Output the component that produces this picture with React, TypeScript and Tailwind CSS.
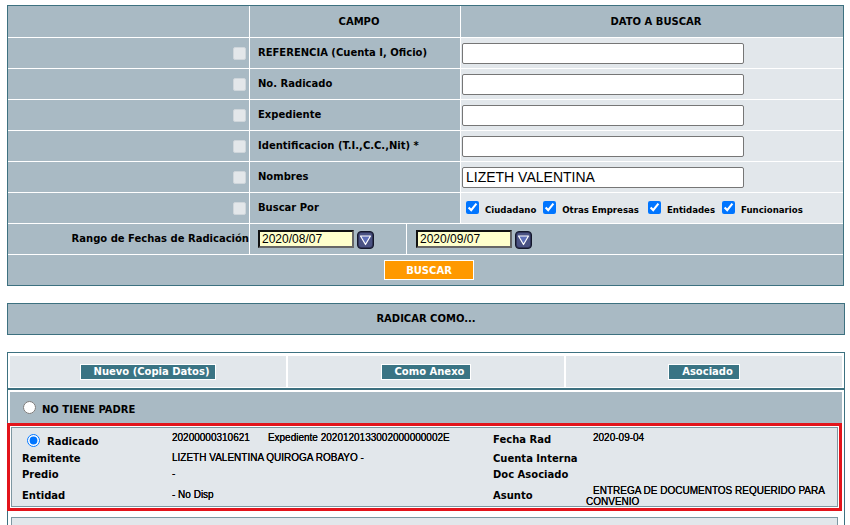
import React from "react";

const V = "font-['DejaVu_Sans',Verdana,sans-serif] font-bold text-[10px] leading-[12px] text-black";
const A = "font-['Liberation_Sans',Arial,sans-serif] text-[10px] leading-[12px] text-black [text-shadow:0_0_0.3px_#000]";

function DisabledBox() {
  return <span className="inline-block w-[13px] h-[13px] rounded-[2px] bg-[#e3e7ea] border border-[#cfd6db]" />;
}

function CalBtn() {
  return (
    <svg width="17" height="18" viewBox="0 0 17 18" className="block">
      <rect x="0.5" y="0.5" width="16" height="17" rx="3.5" fill="#2f3458" stroke="#14172b" />
      <rect x="2" y="2" width="13" height="14" rx="2" fill="#4a5283" />
      <polygon points="3.5,5 13.5,5 8.5,13.5" fill="#5e6fb8" stroke="#ffffff" strokeWidth="1.2" strokeLinejoin="round" />
    </svg>
  );
}

function TextIn({ value }: { value?: string }) {
  return (
    <div className="w-[282px] h-[21px] border border-[#767676] rounded-[2px] bg-white flex items-center pl-[3px] font-['Liberation_Sans',Arial,sans-serif] text-[14px] text-black">
      {value}
    </div>
  );
}

function DateIn({ value }: { value: string }) {
  return (
    <div className="w-[96px] h-[18px] bg-[#ffffcc] border-2 border-t-[#111] border-l-[#111] border-r-[#666] border-b-[#666] flex items-center pl-[2px] font-['Liberation_Sans',Arial,sans-serif] text-[12px] text-black">
      {value}
    </div>
  );
}

function TealBtn({ children }: { children: React.ReactNode }) {
  return (
    <div className="h-[16px] border border-white bg-[#3a7484] pl-[13px] pr-[6px] flex items-center font-['DejaVu_Sans',Verdana,sans-serif] font-bold text-[10px] text-white">
      {children}
    </div>
  );
}

export default function App() {
  const rows: { label: string; value?: string }[] = [
    { label: "REFERENCIA (Cuenta I, Oficio)" },
    { label: "No. Radicado" },
    { label: "Expediente" },
    { label: "Identificacion (T.I.,C.C.,Nit) *" },
    { label: "Nombres", value: "LIZETH VALENTINA" },
  ];
  const gray = "bg-[#a9bac4]";
  const light = "bg-[#e2e7eb]";
  const chk = [
    { t: "Ciudadano", ml: "ml-0" },
    { t: "Otras Empresas", ml: "ml-[7px]" },
    { t: "Entidades", ml: "ml-[9px]" },
    { t: "Funcionarios", ml: "ml-[7px]" },
  ];
  return (
    <div className="w-[850px] h-[525px] overflow-hidden bg-white pt-[5px]">
      {/* Search table */}
      <div className="ml-[7px] w-[837px] border border-[#3d7180] bg-white">
        <div className="grid grid-cols-[241px_210px_382px] gap-px">
          <div className={`${gray} h-[31px]`} />
          <div className={`${gray} h-[31px] flex items-center justify-center pl-[8px] ${V}`}>CAMPO</div>
          <div className={`${gray} h-[31px] flex items-center justify-center pl-[8px] ${V}`}>DATO A BUSCAR</div>
          {rows.map((r) => (
            <React.Fragment key={r.label}>
              <div className={`${gray} h-[30px] flex items-center justify-end pr-[3px]`}>
                <DisabledBox />
              </div>
              <div className={`${gray} h-[30px] flex items-center pl-[8px] ${V}`}>{r.label}</div>
              <div className={`${light} h-[30px] flex items-center pl-px`}>
                <TextIn value={r.value} />
              </div>
            </React.Fragment>
          ))}
          <div className={`${gray} h-[30px] flex items-center justify-end pr-[3px]`}>
            <DisabledBox />
          </div>
          <div className={`${gray} h-[30px] flex items-center pl-[8px] ${V}`}>Buscar Por</div>
          <div className={`${light} h-[30px] flex items-start pl-[5px]`}>
            {chk.map((c) => (
              <React.Fragment key={c.t}>
                <input type="checkbox" defaultChecked className={`${c.ml} mt-[8px] w-[13px] h-[13px]`} />
                <span className="ml-[6px] mt-[12px] font-['DejaVu_Sans',Verdana,sans-serif] font-bold text-[8.6px] leading-[10px] text-black">
                  {c.t}
                </span>
              </React.Fragment>
            ))}
          </div>
        </div>
        <div className="mt-px grid grid-cols-[241px_156px_436px] gap-px">
          <div className={`${gray} h-[30px] flex items-center justify-end ${V}`}>Rango de Fechas de Radicación</div>
          <div className={`${gray} h-[30px] flex items-start pl-[8px] pt-[6px] gap-[3px]`}>
            <DateIn value="2020/08/07" />
            <div className="mt-px"><CalBtn /></div>
          </div>
          <div className={`${gray} h-[30px] flex items-start pl-[9px] pt-[6px] gap-[3px]`}>
            <DateIn value="2020/09/07" />
            <div className="mt-px"><CalBtn /></div>
          </div>
        </div>
        <div className={`mt-px ${gray} h-[30px] flex items-center justify-center pl-[7px]`}>
          <div className="w-[90px] h-[20px] bg-[#ff9900] border border-white flex items-center justify-center font-['DejaVu_Sans',Verdana,sans-serif] font-bold text-[10px] text-white">
            BUSCAR
          </div>
        </div>
      </div>

      {/* Radicar como */}
      <div className={`ml-[7px] mt-[17px] w-[838px] h-[32px] border border-[#3d7180] ${gray} flex items-center justify-center ${V}`}>
        RADICAR COMO...
      </div>

      {/* Options */}
      <div className="ml-[7px] mt-[17px] w-[838px] border border-[#3d7180] bg-white pt-[3px] pb-[20px]">
        <div className="px-[2px] grid grid-cols-[276px_276px_276px] gap-[2px]">
          <div className={`${light} h-[31px] flex items-center justify-center`}>
            <TealBtn>Nuevo (Copia Datos)</TealBtn>
          </div>
          <div className={`${light} h-[31px] flex items-center justify-center`}>
            <TealBtn>Como Anexo</TealBtn>
          </div>
          <div className={`${light} h-[31px] flex items-center justify-center`}>
            <TealBtn>Asociado</TealBtn>
          </div>
        </div>
        <div className="mt-px border-t-2 border-[#3d7180] pt-[2px] px-[2px]">
          <div className={`${gray} h-[31px] flex items-center pl-[13px]`}>
            <input type="radio" name="padre" className="m-0 w-[13px] h-[13px]" />
            <span className={`ml-[6px] mt-[5px] ${V}`}>NO TIENE PADRE</span>
          </div>
          <div className="-ml-[3px] w-[835px] border-[3px] border-[#e3141b] p-px bg-white">
            <div className={`border border-[#7d97a2] ${light} grid grid-cols-[150px_323px_98px_254px] grid-rows-[24px_16px_17px_21px]`}>
              {/* row 1 */}
              <div className="flex items-start pl-[15px] pt-[6px]">
                <input type="radio" name="padre" defaultChecked className="m-0 w-[13px] h-[13px]" />
                <span className={`ml-[7px] mt-[2px] ${V}`}>Radicado</span>
              </div>
              <div className={`pl-[10px] pt-[4px] flex ${A}`}>
                <span>20200000310621</span>
                <span className="ml-[18px]">Expediente 2020120133002000000002E</span>
              </div>
              <div className={`pl-[8px] pt-[6px] ${V}`}>Fecha Rad</div>
              <div className={`pl-[10px] pt-[4px] ${A}`}>2020-09-04</div>
              {/* row 2 */}
              <div className={`pl-[10px] pt-px ${V}`}>Remitente</div>
              <div className={`pl-[10px] ${A}`}>LIZETH VALENTINA QUIROGA ROBAYO -</div>
              <div className={`pl-[8px] pt-px ${V}`}>Cuenta Interna</div>
              <div />
              {/* row 3 */}
              <div className={`pl-[10px] pt-px ${V}`}>Predio</div>
              <div className={`pl-[10px] ${A}`}>-</div>
              <div className={`pl-[8px] pt-px ${V}`}>Doc Asociado</div>
              <div />
              {/* row 4 */}
              <div className={`pl-[10px] pt-[5px] ${V}`}>Entidad</div>
              <div className={`pl-[10px] pt-[4px] ${A}`}>- No Disp</div>
              <div className={`pl-[8px] pt-[5px] ${V}`}>Asunto</div>
              <div className="pl-[3px] indent-[7px] font-['Liberation_Sans',Arial,sans-serif] text-[10px] leading-[11px] text-black [text-shadow:0_0_0.3px_#000]">
                ENTREGA DE DOCUMENTOS REQUERIDO PARA CONVENIO
              </div>
            </div>
          </div>
          <div className={`ml-px mt-[6px] w-[827px] h-[30px] border border-[#7d97a2] ${light} pl-[16px] pt-[4px]`}>
            <input type="radio" name="padre" className="m-0 w-[13px] h-[13px]" />
          </div>
        </div>
      </div>
    </div>
  );
}
